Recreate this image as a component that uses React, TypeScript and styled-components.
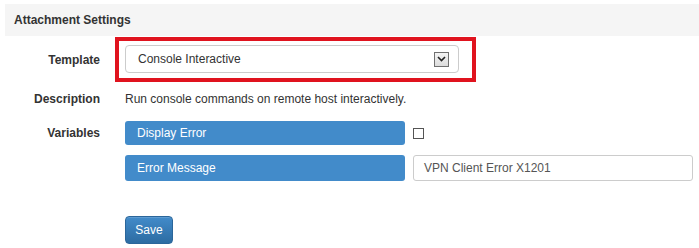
import { FC } from 'react'
import styled, { createGlobalStyle } from 'styled-components'

const GlobalStyle = createGlobalStyle`
   body {
      margin: 0;
      background: #fff;
      font-family: 'Liberation Sans', Arial, sans-serif;
      font-size: 12px;
      color: #333;
   }
`

const variables = [
   { id: 1, name: 'Display Error', kind: 'checkbox', value: '', height: 24 },
   { id: 2, name: 'Error Message', kind: 'text', value: 'VPN Client Error X1201', height: 26 },
]

const App: FC = () => {
   return (
      <Page>
         <GlobalStyle />

         <Header>Attachment Settings</Header>

         <TemplateRow>
            <Label>Template</Label>
            <Highlight>
               <Select>
                  <span>Console Interactive</span>
                  <Arrow>
                     <svg width='9' height='6' viewBox='0 0 9 6'>
                        <path d='M1 1 L4.5 4.5 L8 1' fill='none' stroke='#222' strokeWidth='1.6' />
                     </svg>
                  </Arrow>
               </Select>
            </Highlight>
         </TemplateRow>

         <Row $mt={7}>
            <Label>Description</Label>
            <Text>Run console commands on remote host interactively.</Text>
         </Row>

         <Row $mt={12}>
            <Label $top>Variables</Label>
            <VarList>
               {variables.map((v) => (
                  <VarRow key={v.id}>
                     <VarName $h={v.height}>{v.name}</VarName>
                     {v.kind === 'checkbox' ? (
                        <Check />
                     ) : (
                        <TextInput $h={v.height}>{v.value}</TextInput>
                     )}
                  </VarRow>
               ))}
            </VarList>
         </Row>

         <Actions>
            <SaveButton>Save</SaveButton>
         </Actions>
      </Page>
   )
}

export default App

const Page = styled.main`
   padding: 4px 0 0 5px;
   width: 694px;
`

const Header = styled.h3`
   margin: 0;
   height: 32px;
   display: flex;
   align-items: center;
   padding-left: 9px;
   background: #f5f5f5;
   font-size: 12px;
   font-weight: bold;
   color: #333;
`

const Row = styled.div<{ $mt: number }>`
   display: flex;
   align-items: center;
   margin-top: ${(p) => p.$mt}px;
`

const TemplateRow = styled.div`
   display: flex;
   align-items: center;
   margin-top: 1px;
`

const Label = styled.div<{ $top?: boolean }>`
   width: 95px;
   margin-right: 25px;
   text-align: right;
   font-weight: bold;
   align-self: ${(p) => (p.$top ? 'flex-start' : 'center')};
   line-height: ${(p) => (p.$top ? '25px' : '20px')};
`

const Highlight = styled.div`
   margin-left: -10px;
   border: 4px solid #e0131e;
   padding: 4px 13px 5px 6px;
`

const Select = styled.div`
   width: 334px;
   height: 28px;
   box-sizing: border-box;
   border: 1px solid #ccc;
   border-radius: 4px;
   display: flex;
   align-items: center;
   justify-content: space-between;
   padding: 0 9px 0 12px;
   background: #fff;
`

const Arrow = styled.span`
   width: 15px;
   height: 15px;
   box-sizing: border-box;
   border: 1px solid #707070;
   background: linear-gradient(#f4f4f4, #dcdcdc);
   display: flex;
   align-items: center;
   justify-content: center;
`

const Text = styled.div`
   line-height: 20px;
`

const VarList = styled.div`
   display: flex;
   flex-direction: column;
   gap: 10px;
`

const VarRow = styled.div`
   display: flex;
   align-items: center;
   gap: 8px;
`

const VarName = styled.div<{ $h: number }>`
   width: 280px;
   height: ${(p) => p.$h}px;
   box-sizing: border-box;
   background: #428bca;
   border-radius: 3px;
   color: #fff;
   padding-left: 12px;
   display: flex;
   align-items: center;
`

const Check = styled.span`
   width: 11px;
   height: 11px;
   box-sizing: border-box;
   border: 1px solid #555;
   background: #fff;
`

const TextInput = styled.div<{ $h: number }>`
   width: 280px;
   height: ${(p) => p.$h}px;
   box-sizing: border-box;
   border: 1px solid #ccc;
   border-radius: 3px;
   padding-left: 10px;
   display: flex;
   align-items: center;
   color: #555;
`

const Actions = styled.div`
   margin: 35px 0 0 120px;
`

const SaveButton = styled.button`
   width: 48px;
   height: 28px;
   border: 1px solid #2b669a;
   border-radius: 4px;
   background: linear-gradient(to bottom, #428bca 0%, #2d6ca2 100%);
   color: #fff;
   font-family: 'Liberation Sans', Arial, sans-serif;
   font-size: 12px;
   padding: 0;
   cursor: pointer;
   box-shadow: inset 0 1px 0 rgba(255, 255, 255, 0.15);
`
